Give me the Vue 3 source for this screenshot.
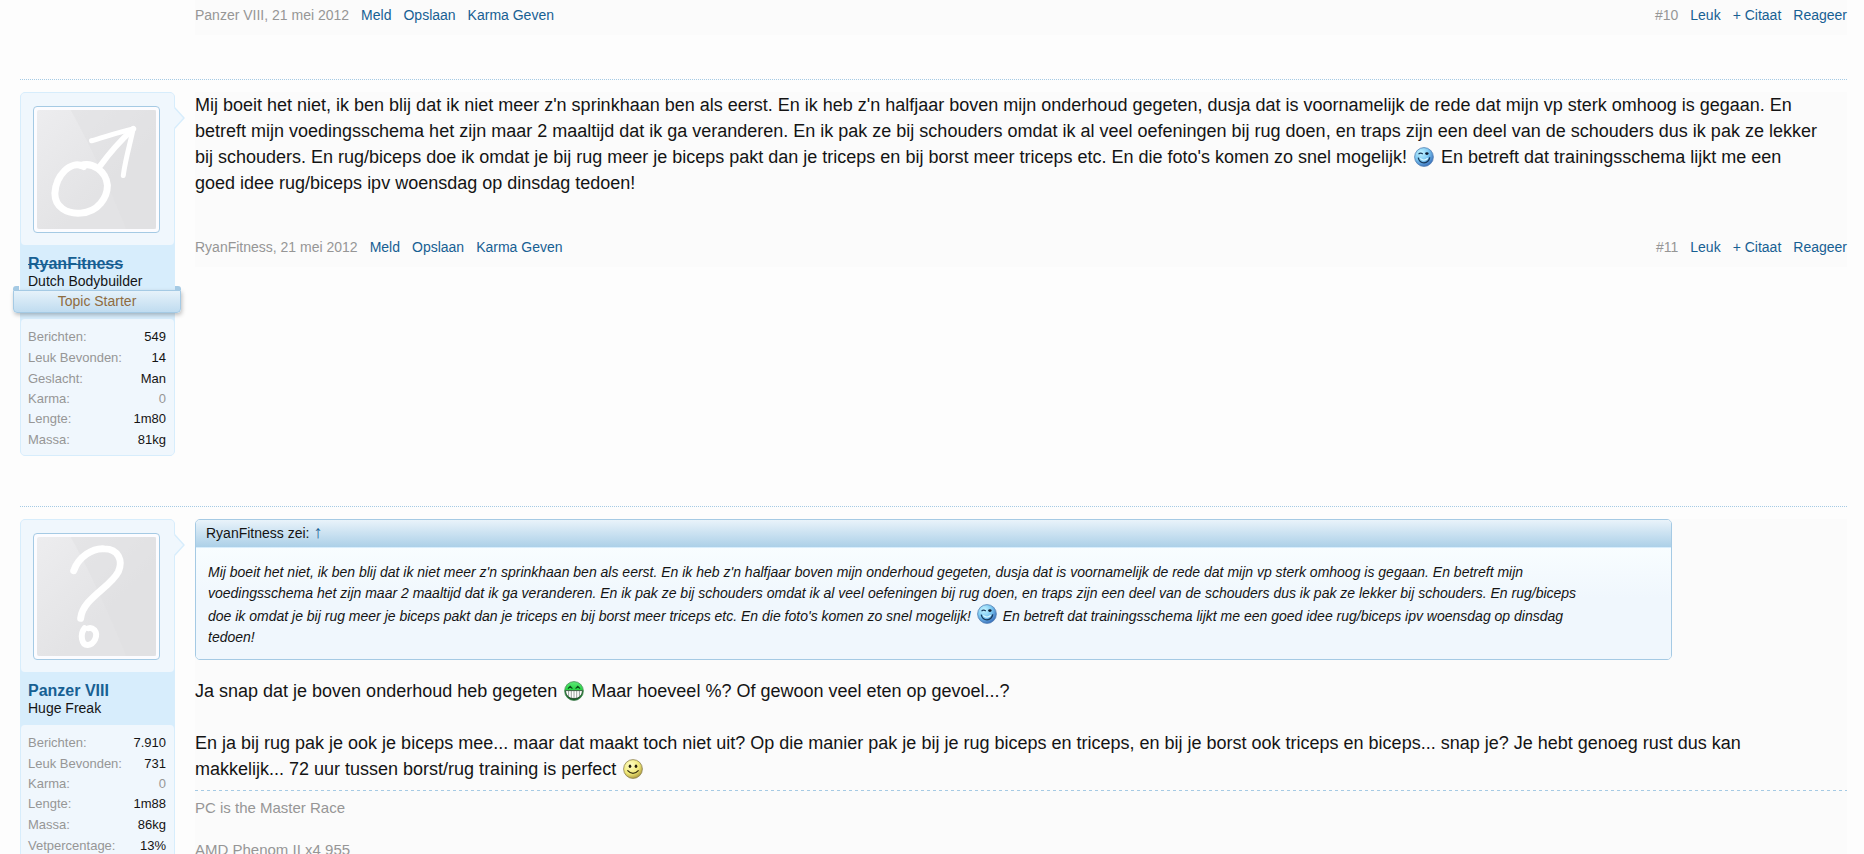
<template>
  <div class="page">
    <svg class="sprite" aria-hidden="true">
      <defs>
        <radialGradient id="blue-fill" cx="35%" cy="28%" r="80%">
          <stop offset="0" stop-color="#c4f4ff" />
          <stop offset="0.5" stop-color="#7cc8f2" />
          <stop offset="1" stop-color="#2f62b4" />
        </radialGradient>
        <radialGradient id="yellow-fill" cx="38%" cy="30%" r="75%">
          <stop offset="0" stop-color="#ffffc8" />
          <stop offset="0.6" stop-color="#f0e878" />
          <stop offset="1" stop-color="#a89438" />
        </radialGradient>
        <linearGradient id="green-fill" x1="0" y1="0" x2="0" y2="1">
          <stop offset="0" stop-color="#5fe878" />
          <stop offset="0.5" stop-color="#1fcf3c" />
          <stop offset="1" stop-color="#0c4a1c" />
        </linearGradient>
        <linearGradient id="avatar-fill" x1="0" y1="0" x2="1" y2="1">
          <stop offset="0" stop-color="#ededef" />
          <stop offset="0.6" stop-color="#e3e3e5" />
        </linearGradient>
      </defs>
      <symbol id="smiley-wink" viewBox="0 0 20 20">
        <circle cx="10" cy="10" r="9.4" fill="url(#blue-fill)" stroke="#5482b4" stroke-width="0.8" />
        <path d="M4.5 7.2 Q6.5 5.2 8.8 7" fill="none" stroke="#16385c" stroke-width="1.2" />
        <ellipse cx="12.9" cy="6.6" rx="1.7" ry="1.4" fill="#0e1c30" />
        <path d="M4.2 10.6 Q5.4 15.8 10 15.8 Q14.8 15.6 15.8 10.4" fill="none" stroke="#16385c" stroke-width="1.3" />
        <path d="M6.2 11.4 Q10 14.8 13.8 11.2" fill="none" stroke="#d8f8ff" stroke-width="1.2" />
      </symbol>
      <symbol id="smiley-grin" viewBox="0 0 20 20">
        <circle cx="10" cy="10" r="9.4" fill="url(#green-fill)" stroke="#4a8a58" stroke-width="0.8" />
        <path d="M4 7.6 L6.2 5.4 L8.4 7.6 M11.6 7.6 L13.8 5.4 L16 7.6" fill="none" stroke="#0a4a18" stroke-width="1.2" />
        <path d="M1.4 9.6 H18.6 Q17.8 17.4 10 17.6 Q2.2 17.4 1.4 9.6 Z" fill="#fff" stroke="#243c2a" stroke-width="0.8" />
        <path d="M4.6 10 V15.4 M7.3 10 V17 M10 10 V17.4 M12.7 10 V17 M15.4 10 V15.4" stroke="#6d7670" stroke-width="0.7" />
      </symbol>
      <symbol id="smiley-smile" viewBox="0 0 20 20">
        <circle cx="10" cy="10" r="9.4" fill="url(#yellow-fill)" stroke="#8c8050" stroke-width="0.8" />
        <ellipse cx="7" cy="7.2" rx="1.3" ry="1.7" fill="#25200c" />
        <ellipse cx="13" cy="7.2" rx="1.3" ry="1.7" fill="#25200c" />
        <path d="M4.4 11.4 Q10 17.4 15.6 11.4" fill="none" stroke="#3a3212" stroke-width="1.3" />
      </symbol>
    </svg>

    <section class="post">
      <div class="message">
        <footer class="meta">
          <div class="links">
            <span class="muted">Panzer VIII, 21 mei 2012</span>
            <a v-for="link in privateLinks" :key="link" href="#">{{ link }}</a>
          </div>
          <div class="links">
            <a class="muted" href="#">#10</a>
            <a v-for="link in publicLinks" :key="link" href="#">{{ link }}</a>
          </div>
        </footer>
      </div>
    </section>

    <section v-for="post in posts" :key="post.id" class="post separated">
      <aside class="user">
        <div class="panel avatar-holder">
          <a class="avatar" href="#" :aria-label="post.user">
            <svg viewBox="0 0 120 120">
              <rect width="120" height="120" rx="2" fill="url(#avatar-fill)" />
              <path d="M34 0 H120 V120 H90 Q62 50 34 0 Z" fill="#dfdfe1" opacity="0.5" />
              <g v-if="post.avatar === 'male'" fill="none" stroke="#fff" stroke-linecap="round" stroke-linejoin="round">
                <path d="M47 57 C34 50 19 66 18 84 C18 98 30 105 44 104 C62 103 71 88 71 76 C70 62 56 52 44 56" stroke-width="7" />
                <path d="M64 56 C74 42 84 31 97 19" stroke-width="6" />
                <path d="M55 31 C69 27 83 22 97 19 C94 34 89 50 87 66" stroke-width="5" />
              </g>
              <g v-else fill="none" stroke="#fff" stroke-linecap="round" stroke-linejoin="round">
                <path d="M37 34 C42 20 56 11 68 12 C82 12 87 24 82 35 C74 51 46 62 44 82" stroke-width="7" />
                <path d="M48 92 C43 98 45 109 51 109 C58 108 62 99 58 94 Q55 91 52 92" stroke-width="6" />
              </g>
            </svg>
          </a>
        </div>
        <div class="user-text">
          <a class="username" :class="{ banned: post.banned }" href="#">{{ post.user }}</a>
          <em class="user-title">{{ post.title }}</em>
          <em v-if="post.starter" class="ribbon">Topic Starter</em>
        </div>
        <dl class="panel stats">
          <div v-for="stat in post.stats" :key="stat.label" :class="{ karma: stat.label === 'Karma:' }">
            <dt>{{ stat.label }}</dt>
            <dd>{{ stat.value }}</dd>
          </div>
        </dl>
        <svg class="arrow" viewBox="0 0 11 22" width="11" height="22" aria-hidden="true">
          <path d="M0 0 L10 11 L0 22 Z" fill="#f0f7fd" />
          <path d="M0.5 0.5 L10 11 L0.5 21.5" fill="none" stroke="#d7edfc" stroke-width="1.4" />
        </svg>
      </aside>

      <div v-if="post.id === 11" class="message">
        <p class="text">
          Mij boeit het niet, ik ben blij dat ik niet meer z'n sprinkhaan ben als eerst. En ik heb z'n halfjaar boven mijn onderhoud gegeten, dusja dat is voornamelijk de rede dat mijn vp sterk omhoog is gegaan. En<br />
          betreft mijn voedingsschema het zijn maar 2 maaltijd dat ik ga veranderen. En ik pak ze bij schouders omdat ik al veel oefeningen bij rug doen, en traps zijn een deel van de schouders dus ik pak ze lekker<br />
          bij schouders. En rug/biceps doe ik omdat je bij rug meer je biceps pakt dan je triceps en bij borst meer triceps etc. En die foto's komen zo snel mogelijk!
          <svg class="smiley"><use href="#smiley-wink" /></svg>
          En betreft dat trainingsschema lijkt me een<br />
          goed idee rug/biceps ipv woensdag op dinsdag tedoen!
        </p>
        <footer class="meta spaced">
          <div class="links">
            <span class="muted">RyanFitness, 21 mei 2012</span>
            <a v-for="link in privateLinks" :key="link" href="#">{{ link }}</a>
          </div>
          <div class="links">
            <a class="muted" href="#">#11</a>
            <a v-for="link in publicLinks" :key="link" href="#">{{ link }}</a>
          </div>
        </footer>
      </div>

      <div v-else class="message">
        <div class="quote">
          <div class="quote-head">RyanFitness zei: <a class="jump" href="#">↑</a></div>
          <blockquote>
            Mij boeit het niet, ik ben blij dat ik niet meer z'n sprinkhaan ben als eerst. En ik heb z'n halfjaar boven mijn onderhoud gegeten, dusja dat is voornamelijk de rede dat mijn vp sterk omhoog is gegaan. En betreft mijn<br />
            voedingsschema het zijn maar 2 maaltijd dat ik ga veranderen. En ik pak ze bij schouders omdat ik al veel oefeningen bij rug doen, en traps zijn een deel van de schouders dus ik pak ze lekker bij schouders. En rug/biceps<br />
            doe ik omdat je bij rug meer je biceps pakt dan je triceps en bij borst meer triceps etc. En die foto's komen zo snel mogelijk!
            <svg class="smiley"><use href="#smiley-wink" /></svg>
            En betreft dat trainingsschema lijkt me een goed idee rug/biceps ipv woensdag op dinsdag<br />
            tedoen!
          </blockquote>
        </div>
        <p class="text">
          Ja snap dat je boven onderhoud heb gegeten
          <svg class="smiley"><use href="#smiley-grin" /></svg>
          Maar hoeveel %? Of gewoon veel eten op gevoel...?<br /><br />
          En ja bij rug pak je ook je biceps mee... maar dat maakt toch niet uit? Op die manier pak je bij je rug biceps en triceps, en bij je borst ook triceps en biceps... snap je? Je hebt genoeg rust dus kan<br />
          makkelijk... 72 uur tussen borst/rug training is perfect
          <svg class="smiley"><use href="#smiley-smile" /></svg>
        </p>
        <div class="signature">PC is the Master Race<br /><br />AMD Phenom II x4 955</div>
      </div>
    </section>
  </div>
</template>

<script setup>
const privateLinks = ["Meld", "Opslaan", "Karma Geven"];
const publicLinks = ["Leuk", "+ Citaat", "Reageer"];

const posts = [
  {
    id: 11,
    user: "RyanFitness",
    title: "Dutch Bodybuilder",
    avatar: "male",
    banned: true,
    starter: true,
    stats: [
      { label: "Berichten:", value: "549" },
      { label: "Leuk Bevonden:", value: "14" },
      { label: "Geslacht:", value: "Man" },
      { label: "Karma:", value: "0" },
      { label: "Lengte:", value: "1m80" },
      { label: "Massa:", value: "81kg" },
    ],
  },
  {
    id: 12,
    user: "Panzer VIII",
    title: "Huge Freak",
    avatar: "unknown",
    banned: false,
    starter: false,
    stats: [
      { label: "Berichten:", value: "7.910" },
      { label: "Leuk Bevonden:", value: "731" },
      { label: "Karma:", value: "0" },
      { label: "Lengte:", value: "1m88" },
      { label: "Massa:", value: "86kg" },
      { label: "Vetpercentage:", value: "13%" },
    ],
  },
];
</script>

<style>
body {
  margin: 0;
  background: #fdfdfd;
}
</style>

<style scoped>
.page {
  box-sizing: border-box;
  height: 100vh;
  overflow: hidden;
  padding: 0 17px 0 20px;
  font-family: "Liberation Sans", Arial, sans-serif;
  color: #141414;
}

.sprite {
  position: absolute;
  width: 0;
  height: 0;
}

a {
  color: #176093;
  text-decoration: none;
}

.post {
  display: flex;
  align-items: flex-start;
  gap: 20px;
}

.post:not(.separated) {
  padding-left: 175px;
}

.separated {
  padding-top: 12px;
  border-top: 1px dotted #a5cae4;
}

.user {
  position: relative;
  flex: none;
  box-sizing: border-box;
  width: 155px;
  margin-bottom: 50px;
  border: 1px solid #d7edfc;
  border-radius: 5px;
  background: #d7edfc;
}

.panel {
  border-radius: 4px;
  background: #f0f7fd;
}

.avatar-holder {
  padding: 13px 12px 12px;
}

.avatar {
  display: block;
  box-sizing: border-box;
  width: 127px;
  height: 127px;
  padding: 3px;
  border: 1px solid #a5cae4;
  border-radius: 4px;
  background: #fcfcff;
}

.avatar svg {
  display: block;
  width: 100%;
  height: 100%;
}

.user-text {
  display: flex;
  flex-direction: column;
  padding: 9px 7px 8px;
}

.username {
  font-size: 16px;
  font-weight: bold;
  line-height: 19px;
}

.banned {
  text-decoration: line-through;
}

.user-title {
  font-size: 14px;
  font-style: normal;
  line-height: 17px;
}

.ribbon {
  position: relative;
  box-sizing: border-box;
  height: 23px;
  margin: 0 -14px -2px -15px;
  border: 1px solid #a5cae4;
  border-radius: 0 0 4px 4px;
  background: linear-gradient(#e6f2fa, #c0dcf0);
  box-shadow: 1px 2px 4px rgba(0, 0, 0, 0.25);
  color: #8f6c3f;
  font-size: 14px;
  font-style: normal;
  line-height: 21px;
  text-align: center;
}

.ribbon::before,
.ribbon::after {
  content: "";
  position: absolute;
  top: -5px;
  width: 6px;
  height: 4px;
  background: #a5cae4;
}

.ribbon::before {
  left: -1px;
  border-radius: 3px 0 0 0;
}

.ribbon::after {
  right: -1px;
  border-radius: 0 3px 0 0;
}

.stats {
  margin: 0;
  padding: 7px 8px 5px 7px;
  font-size: 13px;
  line-height: 21px;
}

.stats div {
  display: flex;
  justify-content: space-between;
}

.stats dt,
.stats .karma {
  color: #969696;
}

.stats .karma {
  line-height: 19px;
}

.stats dd {
  margin: 0;
}

.arrow {
  position: absolute;
  top: 14px;
  left: 153px;
}

.message {
  flex: 1;
  min-width: 0;
  margin-bottom: 44px;
  background: #fbfbfb;
}

.text {
  margin: 0;
  font-size: 18px;
  line-height: 26px;
}

.smiley {
  width: 20px;
  height: 20px;
  margin: 0 2px;
  vertical-align: text-bottom;
}

.meta {
  display: flex;
  justify-content: space-between;
  padding: 6px 0 11px;
  font-size: 14px;
  line-height: 18px;
}

.spaced {
  padding-top: 42px;
}

.links {
  display: flex;
  gap: 12px;
}

.muted {
  color: #969696;
}

.quote {
  margin: 0 175px 18px 0;
  border: 1px solid #a5cae4;
  border-radius: 5px;
  overflow: hidden;
}

.quote-head {
  padding: 0 10px;
  border-bottom: 1px solid #d7edfc;
  background: linear-gradient(#e9f3fa, #acd0e8);
  font-size: 14px;
  line-height: 27px;
}

.jump {
  font-family: "Liberation Serif", serif;
  font-size: 18px;
  line-height: 1;
}

blockquote {
  margin: 0;
  padding: 14px 12px 11px;
  background: linear-gradient(#f8fdff, #f0f7fd 50px);
  font-size: 14px;
  font-style: italic;
  line-height: 21px;
}

.signature {
  margin-top: 8px;
  padding: 7px 0;
  background: repeating-linear-gradient(90deg, #a5cae4 0 3px, transparent 3px 6px) top / 100% 1px no-repeat;
  color: #969696;
  font-size: 15px;
  line-height: 21px;
}
</style>
